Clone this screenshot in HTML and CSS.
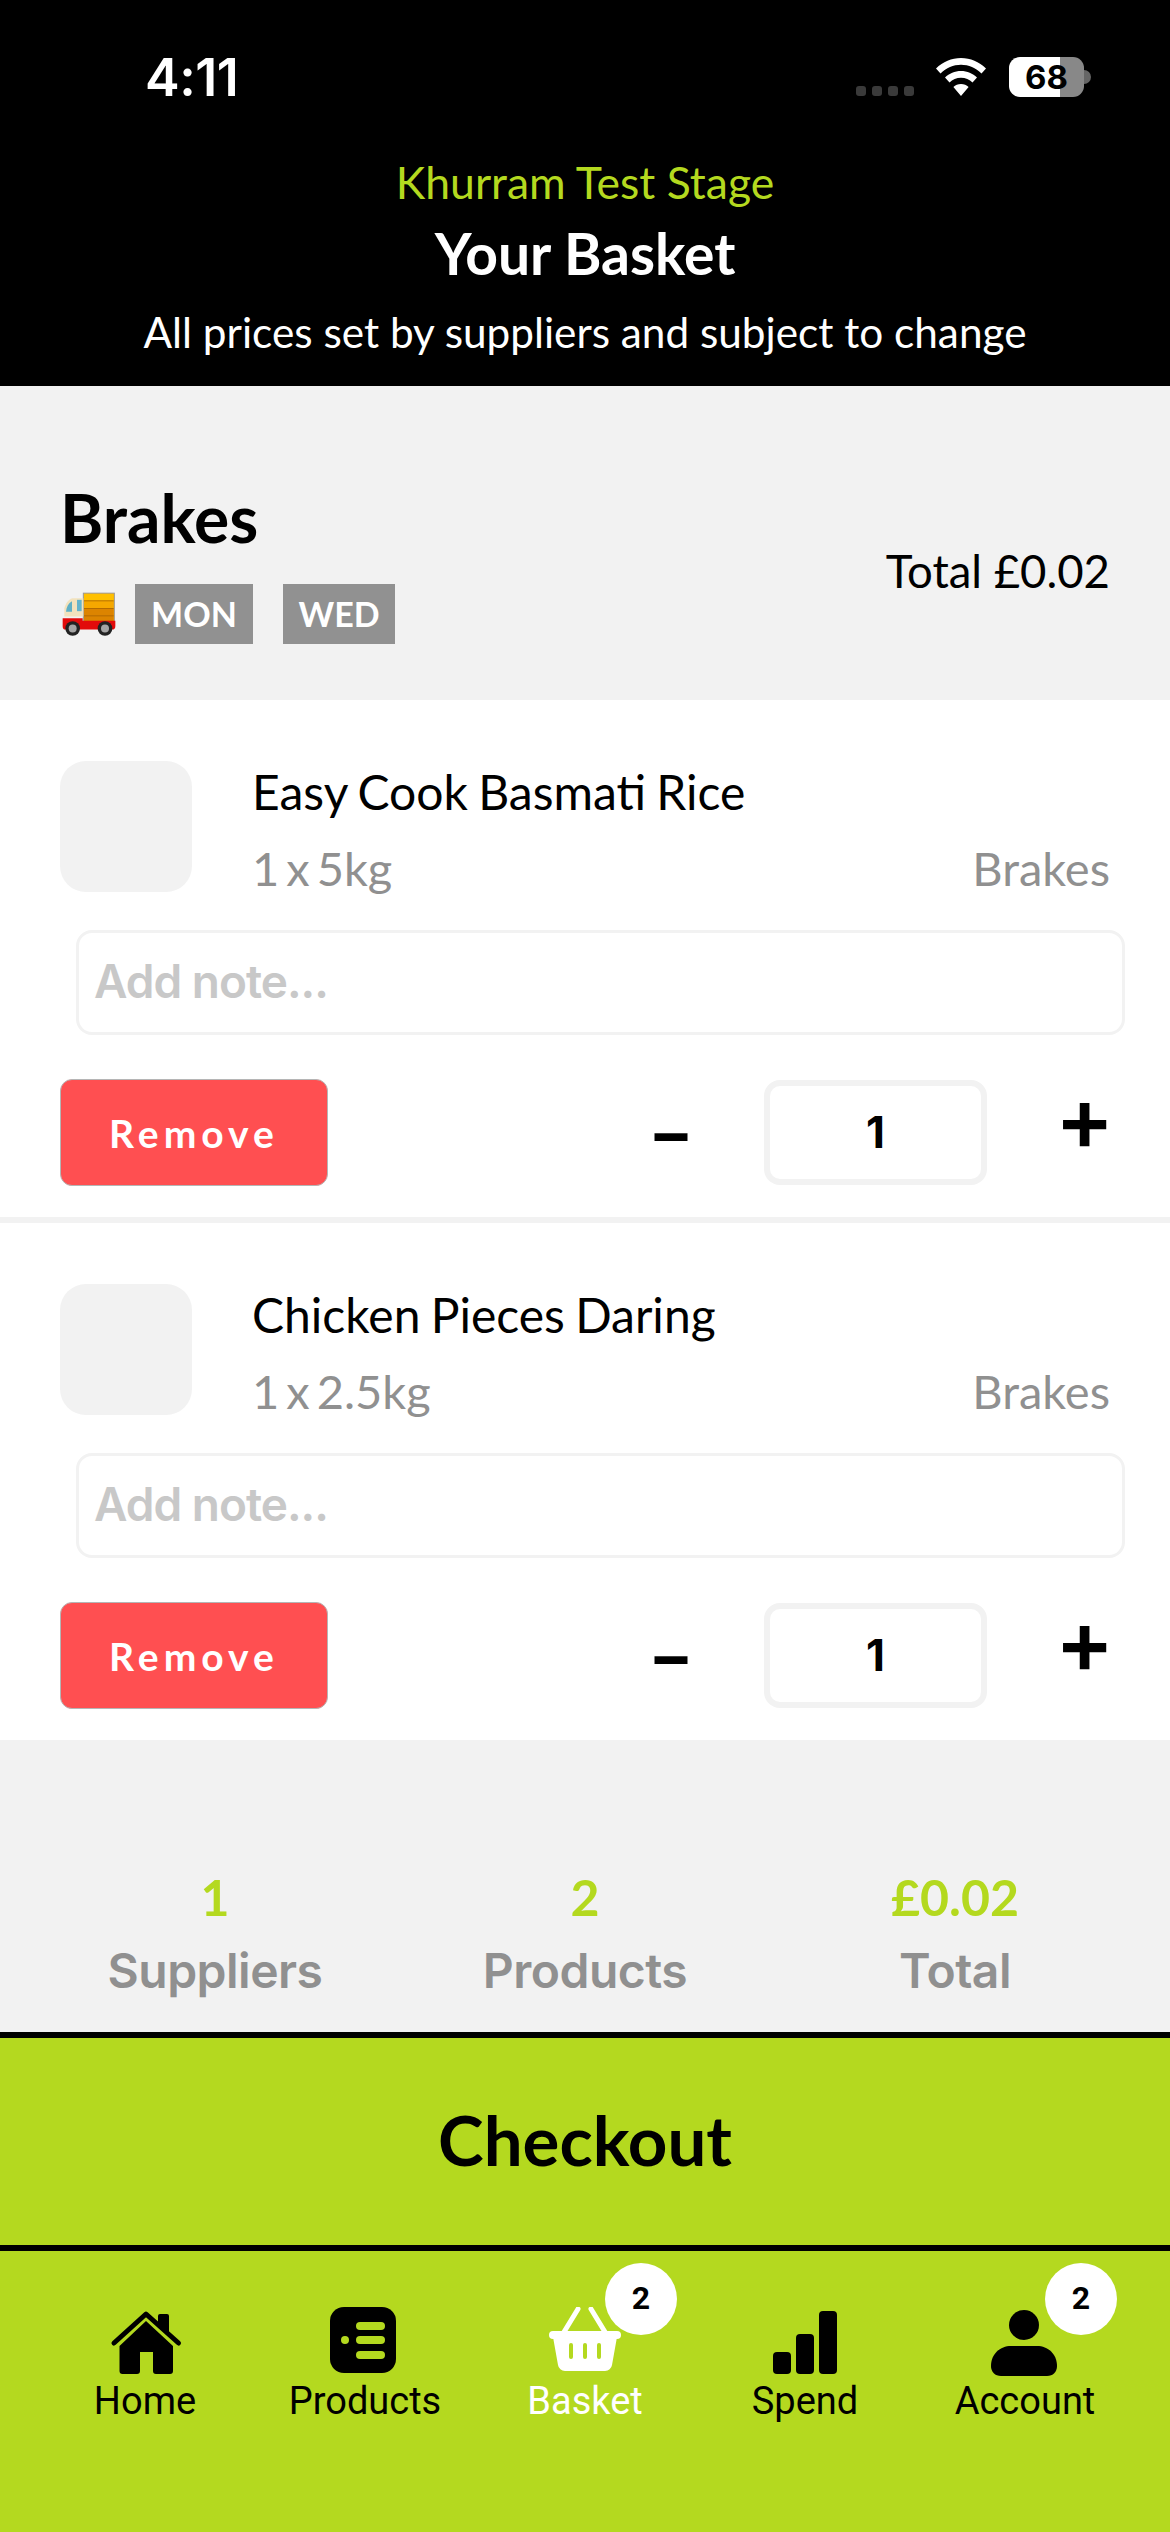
FILE: index.html
```html
<!DOCTYPE html>
<html lang="en">
<head>
    <meta charset="UTF-8">
    <meta name="viewport" content="width=device-width, initial-scale=1.0">
    <title>Your Basket</title>
    <link rel="stylesheet" href="styles.css">
</head>
<body>
    <header class="top">
        <div class="status">
            <span class="clock">4:11</span>
            <div class="status-right">
                <div class="signal"><i></i><i></i><i></i><i></i></div>
                <svg class="wifi" viewBox="0 0 50 38" width="50" height="38">
                    <path fill="#fff" d="M25 0C15.500 0 7 3.700 0 10.500l4.500 5C10.300 10 17.300 6.800 25 6.800s14.700 3.200 20.500 8.700l4.500-5C43 3.700 34.500 0 25 0z"/>
                    <path fill="#fff" d="M25 13c-6.200 0-11.800 2.400-16 6.500l4.500 5c3-2.900 7-4.700 11.500-4.700s8.500 1.800 11.500 4.700l4.500-5C36.800 15.400 31.200 13 25 13z"/>
                    <path fill="#fff" d="M25 26c-3 0-5.600 1.100-7.600 3L25 38l7.600-9c-2-1.900-4.600-3-7.600-3z"/>
                </svg>
                <div class="battery">
                    <div class="battery-body"><span>68</span></div>
                    <div class="battery-nub"></div>
                </div>
            </div>
        </div>
        <p class="stage">Khurram Test Stage</p>
        <h1>Your Basket</h1>
        <p class="note-line">All prices set by suppliers and subject to change</p>
    </header>

    <section class="supplier">
        <div>
            <h2>Brakes</h2>
            <div class="days">
                <svg class="truck" viewBox="98 92 162 134" width="54" height="45">
                    <rect x="162" y="95" width="93" height="90" fill="#f5a800" stroke="#9a9a9a" stroke-width="3"/>
                    <rect x="164" y="97" width="89" height="22" fill="#ffc000"/>
                    <rect x="164" y="142" width="89" height="41" fill="#dc8400"/>
                    <path d="M164 118h89M164 141h89M164 163h89" stroke="#b36b00" stroke-width="3"/>
                    <path d="M105 165v-24c3-14 12-28 24-31h33v55z" fill="#f2e2bd"/>
                    <path d="M110 151c1-14 7-26 18-32v32z" fill="#5fb0c6"/>
                    <rect x="143" y="115" width="14" height="34" fill="#64b4cc"/>
                    <path d="M100 170h60v8h98v16q0 10-10 10H108q-8 0-8-10z" fill="#e20b0b"/>
                    <circle cx="130" cy="201" r="22" fill="#222"/>
                    <circle cx="130" cy="201" r="12" fill="#a5a5a5"/>
                    <circle cx="227" cy="201" r="22" fill="#222"/>
                    <circle cx="227" cy="201" r="12" fill="#a5a5a5"/>
                </svg>
                <span class="day">MON</span>
                <span class="day">WED</span>
            </div>
        </div>
        <span class="supplier-total">Total £0.02</span>
    </section>

    <article class="item">
        <div class="item-top">
            <div class="thumb"></div>
            <div class="item-text">
                <div class="item-name">Easy Cook Basmati Rice</div>
                <div class="item-sub"><span>1 x 5kg</span><span>Brakes</span></div>
            </div>
        </div>
        <div class="note">Add note...</div>
        <div class="item-actions">
            <button class="remove">Remove</button>
            <div class="qty">
                <span class="minus">–</span>
                <span class="qty-box">1</span>
                <span class="plus">+</span>
            </div>
        </div>
    </article>

    <article class="item last">
        <div class="item-top">
            <div class="thumb"></div>
            <div class="item-text">
                <div class="item-name">Chicken Pieces Daring</div>
                <div class="item-sub"><span>1 x 2.5kg</span><span>Brakes</span></div>
            </div>
        </div>
        <div class="note">Add note...</div>
        <div class="item-actions">
            <button class="remove">Remove</button>
            <div class="qty">
                <span class="minus">–</span>
                <span class="qty-box">1</span>
                <span class="plus">+</span>
            </div>
        </div>
    </article>

    <section class="stats">
        <div class="stat"><b>1</b><span>Suppliers</span></div>
        <div class="stat"><b>2</b><span>Products</span></div>
        <div class="stat"><b>£0.02</b><span>Total</span></div>
    </section>

    <button class="checkout">Checkout</button>

    <nav class="tabs">
        <div class="tab">
            <div class="tab-icon">
                <svg viewBox="0 0 80 70" width="80" height="70">
                    <path d="M9 36L41 7l32.500 29" fill="none" stroke="#000" stroke-width="5" stroke-linecap="round" stroke-linejoin="round"/>
                    <path d="M53 18V9a2 2 0 0 1 2-2h7a2 2 0 0 1 2 2v19z"/>
                    <path d="M41 14l27 25v25a3 3 0 0 1-3 3H51a3 3 0 0 1-3-3V45H35v19a3 3 0 0 1-3 3H17.500a3 3 0 0 1-3-3V39z"/>
                </svg>
            </div>
            <span>Home</span>
        </div>
        <div class="tab">
            <div class="tab-icon">
                <svg viewBox="0 0 80 70" width="80" height="70">
                    <rect x="5" y="0" width="66" height="66" rx="14"/>
                    <circle cx="20" cy="33" r="4" fill="#b4d91f"/>
                    <rect x="31" y="15" width="29" height="8" rx="4" fill="#b4d91f"/>
                    <rect x="31" y="29" width="29" height="8" rx="4" fill="#b4d91f"/>
                    <rect x="31" y="44" width="29" height="8" rx="4" fill="#b4d91f"/>
                </svg>
            </div>
            <span>Products</span>
        </div>
        <div class="tab active">
            <div class="tab-icon">
                <svg viewBox="0 0 80 70" width="80" height="70">
                    <path d="M19 25L33 2M60 25L46 2" stroke="#fff" stroke-width="5" stroke-linecap="round" fill="none"/>
                    <rect x="4" y="24" width="72" height="8" rx="4" fill="#fff"/>
                    <path d="M8 30h64l-5 28a7 7 0 0 1-7 6H20a7 7 0 0 1-7-6z" fill="#fff"/>
                    <rect x="24" y="36" width="4" height="16" rx="2" fill="#b4d91f"/>
                    <rect x="38" y="36" width="4" height="16" rx="2" fill="#b4d91f"/>
                    <rect x="52" y="36" width="4" height="16" rx="2" fill="#b4d91f"/>
                </svg>
                <span class="badge">2</span>
            </div>
            <span>Basket</span>
        </div>
        <div class="tab">
            <div class="tab-icon">
                <svg viewBox="0 0 80 70" width="80" height="70">
                    <rect x="8" y="45" width="18" height="22" rx="4"/>
                    <rect x="31" y="27" width="18" height="40" rx="4"/>
                    <rect x="54" y="4" width="18" height="63" rx="4"/>
                </svg>
            </div>
            <span>Spend</span>
        </div>
        <div class="tab">
            <div class="tab-icon">
                <svg viewBox="0 0 80 70" width="80" height="70">
                    <circle cx="39" cy="18" r="15"/>
                    <path d="M26 39h26c11 0 20 8 20 20 0 6-4 10-10 10H16C10 69 6 65 6 59c0-12 9-20 20-20z"/>
                </svg>
                <span class="badge">2</span>
            </div>
            <span>Account</span>
        </div>
    </nav>
</body>
</html>
```

FILE: styles.css
```css
* {
    box-sizing: border-box;
}

body {
    margin: 0;
    background: #fff;
    color: #000;
    font-family: Lato, "Noto Sans", sans-serif;
}

h1, h2, p {
    margin: 0;
}

button {
    border: none;
    padding: 0;
    font-family: inherit;
}

/* header */
.top {
    height: 386px;
    background: #000;
    color: #fff;
    text-align: center;
}

.status {
    height: 150px;
    padding: 57px 79px 0 145px;
    display: flex;
    justify-content: space-between;
    align-items: flex-start;
}

.clock {
    font-family: Inter, sans-serif;
    font-size: 52px;
    font-weight: 600;
    letter-spacing: -0.5px;
    line-height: 42px;
}

.status-right {
    display: flex;
    align-items: flex-end;
    height: 40px;
}

.signal {
    display: flex;
    gap: 6px;
    margin-right: 22px;
    margin-bottom: 1px;
}

.signal i {
    width: 10px;
    height: 10px;
    border-radius: 3px;
    background: #3a3a3a;
}

.wifi {
    margin-right: 23px;
    margin-bottom: 1px;
}

.battery {
    display: flex;
    align-items: center;
}

.battery-body {
    width: 75px;
    height: 40px;
    border-radius: 11px;
    background: linear-gradient(to right, #fff 68%, #888 68%);
    color: #000;
    font-family: Inter, sans-serif;
    font-size: 33px;
    font-weight: 700;
    line-height: 40px;
    text-align: center;
}

.battery-nub {
    width: 7px;
    height: 14px;
    border-radius: 0 7px 7px 0;
    background: #666;
}

.stage {
    color: #b4d91f;
    font-size: 44.500px;
    line-height: 64px;
}

h1 {
    font-size: 57px;
    font-weight: 700;
    line-height: 78px;
}

.note-line {
    font-size: 42.300px;
    line-height: 80px;
}

/* supplier row */
.supplier {
    height: 314px;
    padding: 92px 60px 0 62px;
    background: #f2f2f2;
    display: flex;
    justify-content: space-between;
    align-items: flex-start;
}

h2 {
    margin-left: -2px;
    font-size: 66px;
    font-weight: 700;
    line-height: 80px;
}

.days {
    display: flex;
    align-items: center;
    margin-top: 26px;
}

.truck {
    margin-right: 19px;
}

.day {
    width: 118px;
    height: 60px;
    background: #919191;
    color: #fff;
    font-size: 34px;
    font-weight: 700;
    line-height: 60px;
    text-align: center;
}

.day + .day {
    width: 112px;
    margin-left: 30px;
}

.supplier-total {
    margin-top: 63px;
    font-size: 45.500px;
    line-height: 60px;
}

/* basket items */
.item {
    padding: 61px 60px 31px 60px;
    border-bottom: 6px solid #f2f2f2;
}

.item.last {
    border-bottom: none;
}

.item-top {
    display: flex;
}

.thumb {
    width: 132px;
    height: 131px;
    border-radius: 26px;
    background: #f2f2f2;
    flex-shrink: 0;
}

.item-text {
    flex: 1;
    height: 131px;
    margin-left: 60px;
}

.item-name {
    font-size: 48px;
    line-height: 62px;
    word-spacing: -2px;
}

.item-sub {
    margin-top: 20px;
    display: flex;
    justify-content: space-between;
    color: #909090;
    font-size: 47px;
    line-height: 50px;
    word-spacing: -5px;
}

.note {
    height: 105px;
    margin: 38px -15px 0 16px;
    padding-left: 15px;
    border: 3px solid #f2f2f2;
    border-radius: 16px;
    color: #c8c8c8;
    font-family: Inter, sans-serif;
    font-size: 46px;
    font-weight: 600;
    letter-spacing: -1px;
    line-height: 97px;
}

.item-actions {
    margin-top: 44px;
    display: flex;
    justify-content: space-between;
}

.remove {
    width: 268px;
    height: 107px;
    border: 1px solid #b5b5b5;
    border-radius: 12px;
    background: #ff4f51;
    color: #fff;
    font-size: 39px;
    font-weight: 700;
    letter-spacing: 5px;
}

.qty {
    height: 107px;
    display: flex;
    align-items: center;
    gap: 75px;
    margin-right: 3px;
}

.minus, .plus {
    display: flex;
    justify-content: center;
    font-family: Inter, sans-serif;
    font-weight: 700;
}

.minus {
    width: 36px;
    font-size: 66px;
    line-height: 80px;
}

.plus {
    width: 45px;
    font-size: 88px;
    font-weight: 600;
    line-height: 60px;
    margin-bottom: 30px;
}

.qty-box {
    width: 223px;
    height: 105px;
    border: 6px solid #f2f2f2;
    border-radius: 16px;
    font-family: Inter, sans-serif;
    font-size: 44px;
    font-weight: 700;
    line-height: 93px;
    text-align: center;
}

/* totals */
.stats {
    padding: 127px 30px 31px;
    background: #f2f2f2;
    display: flex;
}

.stat {
    flex: 1;
    display: flex;
    flex-direction: column;
    align-items: center;
}

.stat b {
    color: #b4d91f;
    font-size: 50px;
    font-weight: 700;
    line-height: 60px;
}

.stat span {
    margin-top: 14px;
    color: #909090;
    font-family: Inter, sans-serif;
    font-size: 48px;
    font-weight: 600;
    letter-spacing: -0.5px;
    line-height: 60px;
}

.checkout {
    display: block;
    width: 100%;
    height: 219px;
    padding-bottom: 5px;
    border-top: 6px solid #000;
    border-bottom: 6px solid #000;
    background: #b4d91f;
    color: #000;
    font-size: 69px;
    font-weight: 700;
}

/* bottom tabs */
.tabs {
    height: 282px;
    padding: 56px 35px 0;
    background: #b4d91f;
    display: grid;
    grid-template-columns: repeat(5, 1fr);
}

.tab {
    display: flex;
    flex-direction: column;
    align-items: center;
    font-family: Roboto, sans-serif;
    font-size: 38px;
    line-height: 44px;
}

.tab.active {
    color: #fff;
}

.tab-icon {
    position: relative;
    width: 80px;
    height: 70px;
    margin-bottom: 2px;
}

.tab-icon svg {
    display: block;
}

.badge {
    position: absolute;
    left: 60px;
    top: -44px;
    width: 72px;
    height: 72px;
    border-radius: 50%;
    background: #fff;
    color: #000;
    font-size: 32px;
    font-weight: 700;
    line-height: 70px;
    text-align: center;
}
```
